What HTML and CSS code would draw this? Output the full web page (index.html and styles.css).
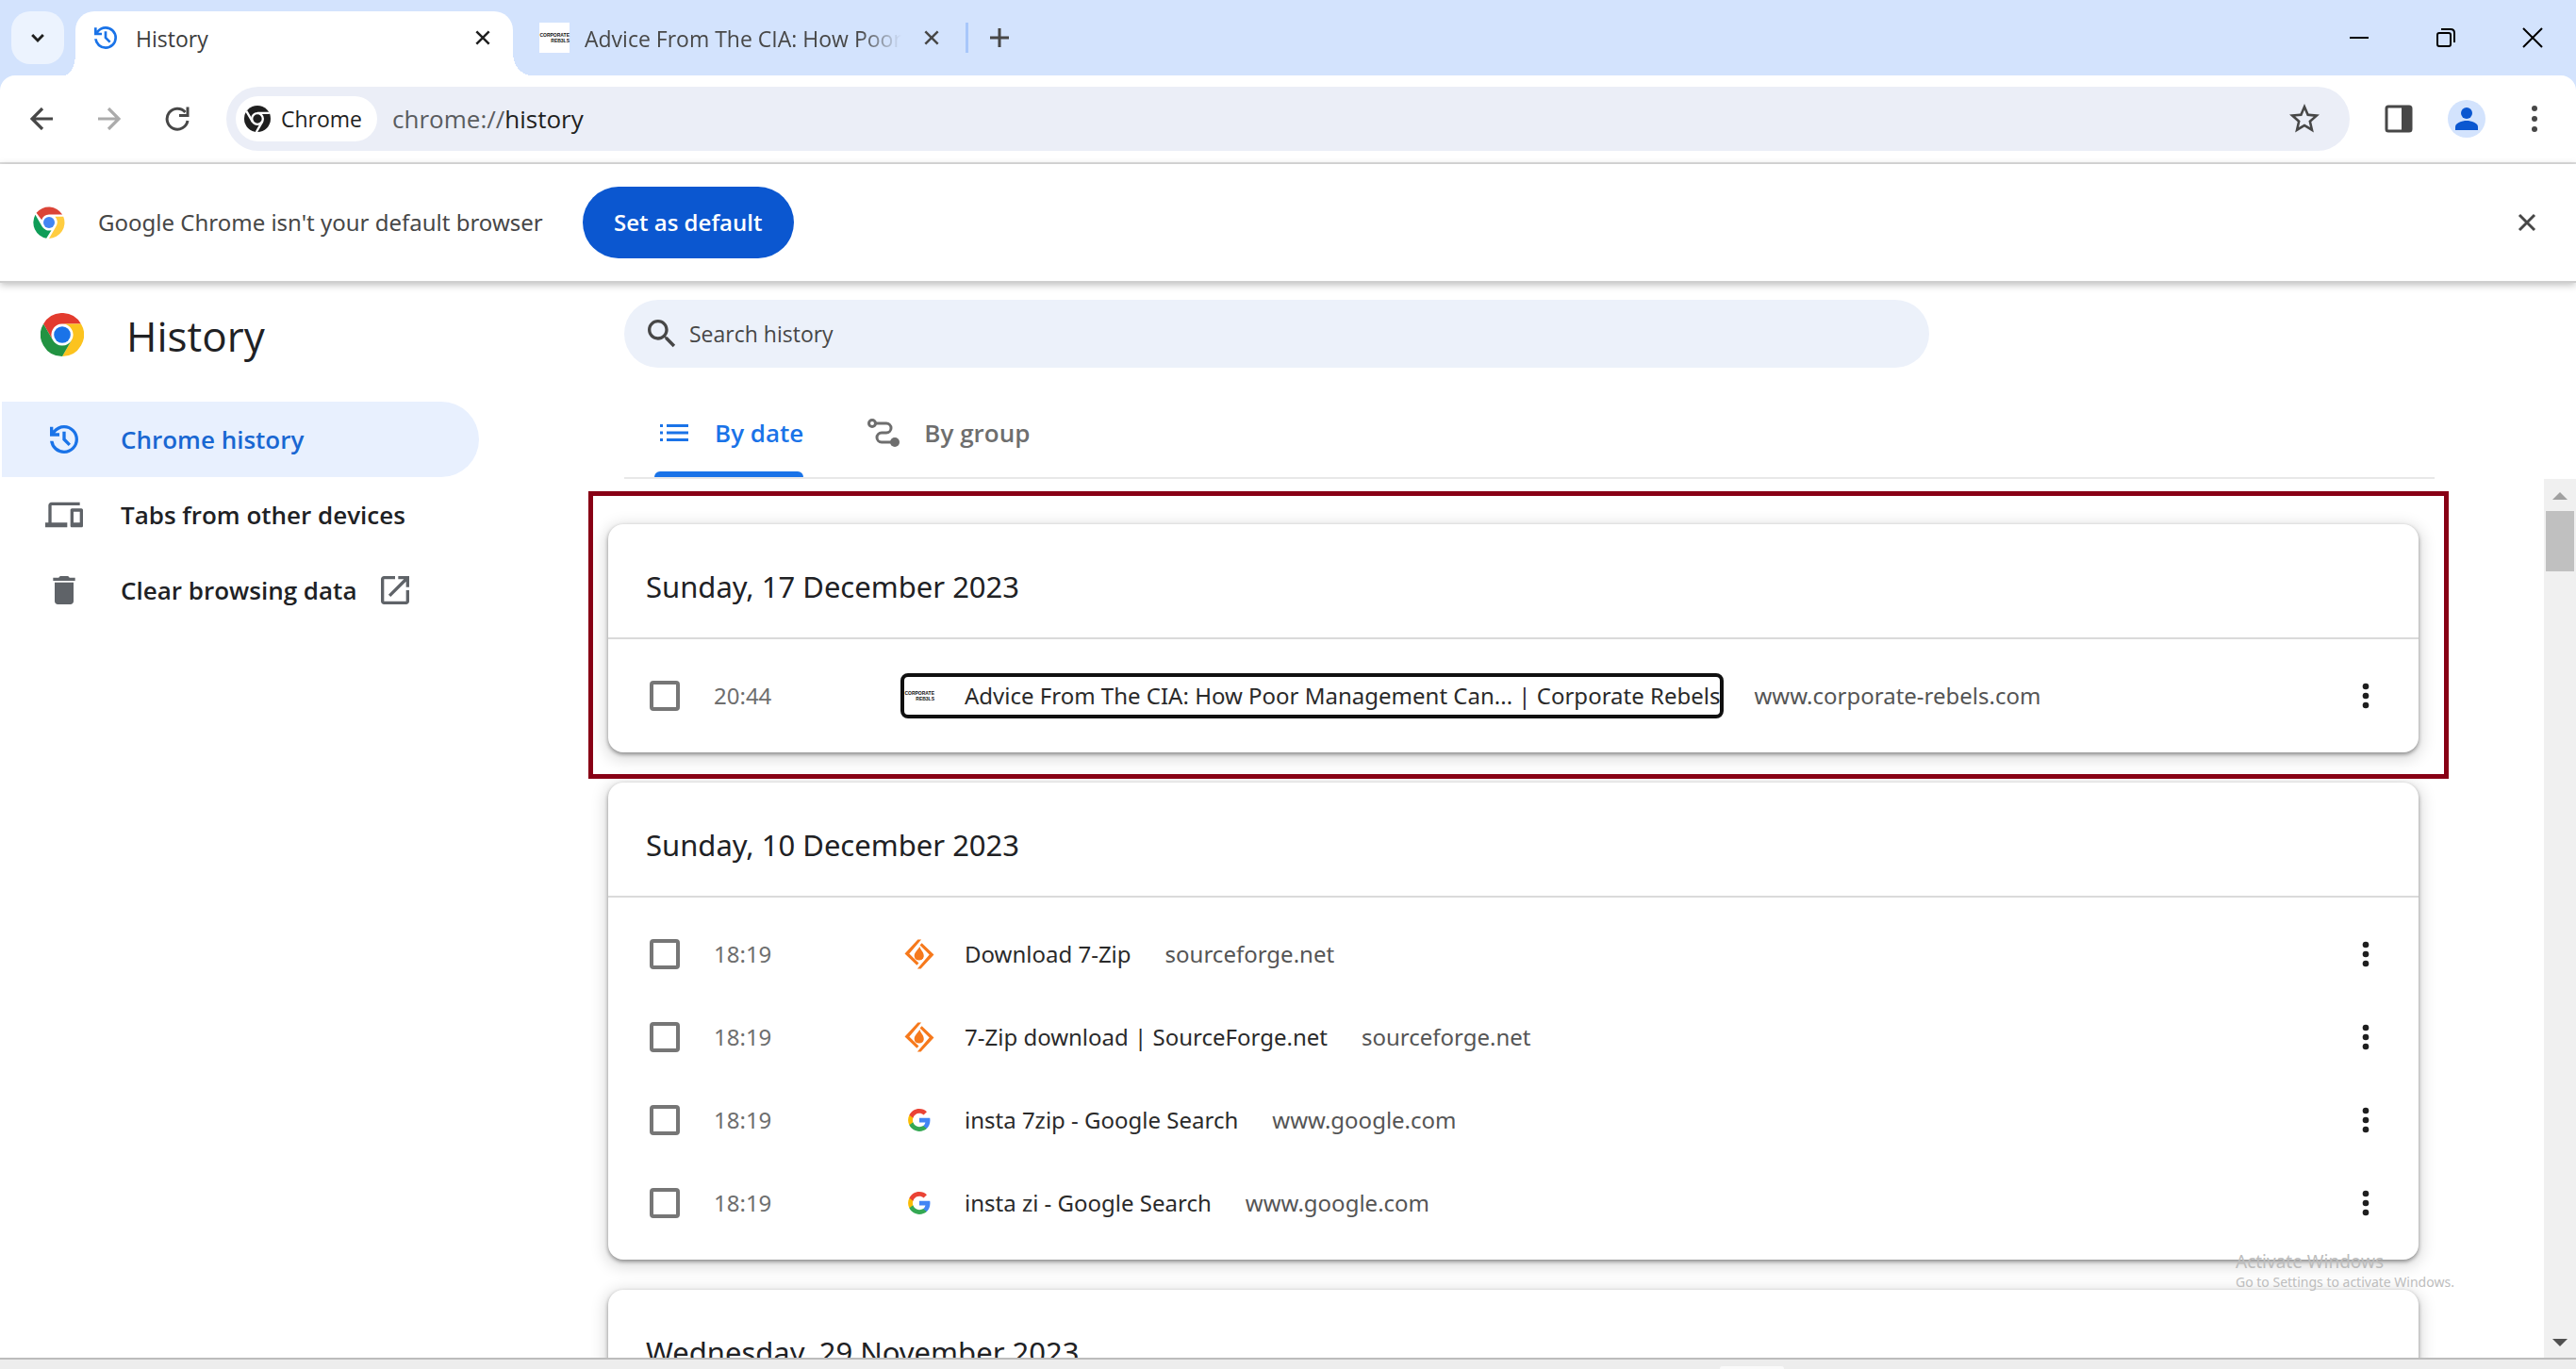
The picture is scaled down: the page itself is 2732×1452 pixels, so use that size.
FILE: index.html
```html
<!DOCTYPE html>
<html lang="en">
<head>
<meta charset="utf-8">
<title>History</title>
<link rel="stylesheet" href="styles.css">
</head>
<body>
<svg class="defs" aria-hidden="true">
  <defs>
    <symbol id="chrome" viewBox="0 0 48 48">
      <circle cx="24" cy="24" r="24" fill="#fff"/>
      <path fill="#e33b2e" d="M3.2 12A24 24 0 0 1 44.8 12H24A12 12 0 0 0 13.6 30Z"/>
      <path fill="#fcc31e" d="M44.8 12A24 24 0 0 1 24 48L34.4 30A12 12 0 0 0 24 12Z"/>
      <path fill="#229342" d="M24 48A24 24 0 0 1 3.2 12L13.6 30A12 12 0 0 0 34.4 30Z"/>
      <circle cx="24" cy="24" r="11.5" fill="#fff"/>
      <circle cx="24" cy="24" r="9.2" fill="#1a73e8"/>
    </symbol>
    <symbol id="chrome-flat" viewBox="0 0 48 48">
      <path fill="#db4437" d="M5 9.500A24 24 0 0 1 44 12H24A12 12 0 0 0 13 20Z"/>
      <path fill="#ffcd40" d="M45.500 15A24 24 0 0 1 24 48L34.4 30A12 12 0 0 0 33 15Z"/>
      <path fill="#0f9d58" d="M20 47.700A24 24 0 0 1 3.500 12.500L13.600 30A12 12 0 0 0 27.500 35.500Z"/>
      <circle cx="24" cy="24" r="10.500" fill="#fff"/>
      <circle cx="24" cy="24" r="8.500" fill="#4285f4"/>
    </symbol>
    <symbol id="history" viewBox="0 0 24 24">
      <path d="M12 21q-3.450 0-6.012-2.288Q3.425 16.425 3.050 13H5.100q.350 2.600 2.313 4.300Q9.375 19 12 19q2.925 0 4.963-2.038Q19 14.925 19 12t-2.037-4.963Q14.925 5 12 5q-1.725 0-3.225.8T6.250 8H9v2H3V4h2v2.350q1.275-1.600 3.113-2.475Q9.950 3 12 3q1.875 0 3.513.712 1.637.713 2.850 1.925 1.212 1.213 1.924 2.850Q21 10.125 21 12t-.713 3.513q-.712 1.637-1.924 2.850-1.213 1.212-2.850 1.924Q13.875 21 12 21Zm2.800-4.800L11 12.400V7h2v4.600l3.200 3.200Z"/>
    </symbol>
    <symbol id="dots" viewBox="0 0 24 24"><circle cx="12" cy="6" r="2"/><circle cx="12" cy="12" r="2"/><circle cx="12" cy="18" r="2"/></symbol>
    <symbol id="cross" viewBox="0 0 24 24"><path d="M4 4 20 20M20 4 4 20" fill="none" stroke="currentColor" stroke-width="3"/></symbol>
    <symbol id="forge" viewBox="1 1 30 30">
      <path fill="#f6791c" d="M14.500 1.500H18L6 15.500 15.500 25 13.500 27 1.500 15.500ZM18.500 5 30.500 16.500 17.500 30.500H14L26 16.500 16.500 7Z"/>
      <path fill="#f6791c" d="M16.500 8.500C17 12 20.500 13.500 20.500 18A4.800 4.800 0 0 1 11 18C11 15 13 13 16.500 8.500Z"/>
    </symbol>
    <symbol id="google" viewBox="0 0 24 24">
      <path fill="#4285f4" d="M22.560 12.250c0-.78-.070-1.530-.200-2.250H12v4.260h5.920c-.260 1.370-1.040 2.530-2.210 3.310v2.770h3.570c2.080-1.920 3.280-4.740 3.280-8.090z"/>
      <path fill="#34a853" d="M12 23c2.970 0 5.460-.98 7.280-2.660l-3.570-2.770c-.98.66-2.230 1.060-3.710 1.060-2.860 0-5.290-1.930-6.160-4.530H2.180v2.840C3.990 20.530 7.700 23 12 23z"/>
      <path fill="#fbbc05" d="M5.840 14.090c-.220-.66-.350-1.360-.350-2.090s.130-1.430.350-2.090V7.070H2.180C1.430 8.550 1 10.220 1 12s.430 3.450 1.180 4.930l3.660-2.840z"/>
      <path fill="#ea4335" d="M12 5.380c1.620 0 3.060.56 4.210 1.640l3.150-3.150C17.450 2.090 14.970 1 12 1 7.700 1 3.990 3.470 2.180 7.070l3.660 2.840C6.710 7.310 9.140 5.380 12 5.380z"/>
    </symbol>
  </defs>
</svg>

<header class="tabstrip">
  <button class="tab-search" aria-label="Search tabs"><svg viewBox="0 0 24 24"><path d="M5 8.500 12 15.500 19 8.500" fill="none" stroke="currentColor" stroke-width="3.500"/></svg></button>
  <div class="tab active">
    <svg class="fav blue"><use href="#history"/></svg>
    <span class="tab-title">History</span>
    <button class="tab-close dark" aria-label="Close tab"><svg><use href="#cross"/></svg></button>
  </div>
  <div class="tab">
    <span class="rebels boxed"><b>CORPORATE</b><b>REB3LS</b></span>
    <span class="tab-title fade">Advice From The CIA: How Poor</span>
    <button class="tab-close" aria-label="Close tab"><svg><use href="#cross"/></svg></button>
  </div>
  <button class="new-tab" aria-label="New tab"><svg viewBox="0 0 24 24"><path d="M12 2V22M2 12H22" fill="none" stroke="currentColor" stroke-width="3"/></svg></button>
  <div class="window-controls">
    <button aria-label="Minimise"><svg viewBox="0 0 20 20"><path d="M0 10H20"/></svg></button>
    <button aria-label="Restore"><svg viewBox="0 0 20 20"><rect x="1" y="5" width="14" height="14" rx="2"/><path d="M5 1H15Q19 1 19 5V15"/></svg></button>
    <button aria-label="Close"><svg viewBox="0 0 20 20"><path d="M0 0 20 20M20 0 0 20"/></svg></button>
  </div>
</header>

<div class="toolbar-back"><nav class="toolbar" aria-label="Navigation">
  <button class="tool" aria-label="Back"><svg viewBox="0 0 24 24"><path d="M24 12H3M13 1 2 12 13 23" fill="none" stroke="currentColor" stroke-width="3.200"/></svg></button>
  <button class="tool dim" aria-label="Forward"><svg viewBox="0 0 24 24"><path d="M0 12H21M11 1 22 12 11 23" fill="none" stroke="currentColor" stroke-width="3.200"/></svg></button>
  <button class="tool reload" aria-label="Reload"><svg viewBox="0 0 28 28"><path d="M25 16A11 11 0 1 1 22.500 7" fill="none" stroke="currentColor" stroke-width="3"/><path d="M26.500 1.500V12H16V9H23.500V1.500Z"/></svg></button>
  <div class="omnibox">
    <button class="chip"><svg viewBox="0 0 48 48"><circle cx="24" cy="24" r="24" fill="#1f1f1f"/><circle cx="24" cy="24" r="10" fill="none" stroke="#fff" stroke-width="4"/><path d="M24 13.500H46M15 29 4 10M33 29 22 48" stroke="#fff" stroke-width="4"/></svg>Chrome</button>
    <label class="url"><span class="scheme">chrome://</span><input aria-label="Address" value="history"></label>
    <button class="star" aria-label="Bookmark"><svg viewBox="2 2 20 20"><path d="M22 9.240l-7.190-.62L12 2 9.190 8.630 2 9.240l5.460 4.730L5.820 21 12 17.270 18.180 21l-1.630-7.030L22 9.240zM12 15.400l-3.760 2.270 1-4.280-3.320-2.880 4.380-.38L12 6.100l1.710 4.040 4.380.38-3.320 2.880 1 4.280L12 15.400z"/></svg></button>
  </div>
  <button class="tool" aria-label="Side panel"><svg class="panel" viewBox="0 0 30 30"><rect x="2" y="2" width="26" height="26" rx="2" fill="none" stroke="currentColor" stroke-width="3"/><path d="M18 2H28V28H18Z"/></svg></button>
  <button class="tool" aria-label="Profile"><svg class="avatar" viewBox="0 0 40 40"><circle cx="20" cy="20" r="20" fill="#d3e3fd"/><circle cx="20" cy="14" r="6"/><path d="M8 32V28.500C8 24.500 15 22 20 22S32 24.500 32 28.500V32Z"/></svg></button>
  <button class="tool" aria-label="Menu"><svg class="menu-dots" viewBox="0 0 12 30"><circle cx="6" cy="4" r="3"/><circle cx="6" cy="15" r="3"/><circle cx="6" cy="26" r="3"/></svg></button>
</nav></div>

<div class="infobar">
  <svg class="info-logo"><use href="#chrome-flat"/></svg>
  <span class="info-text">Google Chrome isn't your default browser</span>
  <button class="set-default">Set as default</button>
  <button class="info-close" aria-label="Dismiss"><svg><use href="#cross"/></svg></button>
</div>

<div class="page">
  <aside class="sidebar">
    <div class="brand"><svg><use href="#chrome"/></svg><h1>History</h1></div>
    <nav>
      <a class="nav-item current" href="#history-list"><svg><use href="#history"/></svg>Chrome history</a>
      <a class="nav-item" href="#devices"><svg viewBox="0 0 24 24"><path d="M4 6h18V4H4c-1.100 0-2 .9-2 2v11H0v3h14v-3H4V6zm19 2h-6c-.55 0-1 .45-1 1v10c0 .55.450 1 1 1h6c.55 0 1-.45 1-1V9c0-.55-.45-1-1-1zm-1 9h-4v-7h4v7z"/></svg>Tabs from other devices</a>
      <a class="nav-item" href="#clear"><svg viewBox="0 0 24 24"><path d="M6 19c0 1.100.9 2 2 2h8c1.100 0 2-.9 2-2V7H6v12zM19 4h-3.500l-1-1h-5l-1 1H5v2h14V4z"/></svg>Clear browsing data<svg class="external" viewBox="3 3 18 18"><path d="M19 19H5V5h7V3H5c-1.110 0-2 .9-2 2v14c0 1.100.89 2 2 2h14c1.100 0 2-.9 2-2v-7h-2v7zM14 3v2h3.590l-9.830 9.830 1.410 1.410L19 6.410V10h2V3h-7z"/></svg></a>
    </nav>
  </aside>

  <main class="main">
    <div class="top">
      <label class="search"><svg viewBox="3 3 18 18"><path d="M15.500 14h-.79l-.28-.27C15.410 12.590 16 11.110 16 9.500 16 5.910 13.090 3 9.500 3S3 5.910 3 9.500 5.910 16 9.500 16c1.610 0 3.090-.59 4.230-1.570l.27.280v.79l5 4.990L20.490 19l-4.990-5zm-6 0C7.010 14 5 11.990 5 9.500S7.010 5 9.500 5 14 7.010 14 9.500 11.990 14 9.500 14z"/></svg><input type="search" placeholder="Search history" aria-label="Search history"></label>
      <div class="views" role="tablist">
        <button class="view on" role="tab" aria-selected="true"><svg viewBox="0 0 34 34"><path d="M2 8h3v3H2zM2 15.500h3v3H2zM2 23h3v3H2zM9 8H32v3H9zM9 15.500H32v3H9zM9 23H32v3H9z"/></svg>By date</button>
        <button class="view" role="tab" aria-selected="false"><svg viewBox="0 0 34 34"><circle cx="5" cy="7" r="3.500" fill="none" stroke="currentColor" stroke-width="3"/><circle cx="29" cy="27" r="5"/><path d="M9 7H20A5 5 0 0 1 20 17H15A5 5 0 0 0 15 27H26" fill="none" stroke="currentColor" stroke-width="3"/></svg>By group</button>
      </div>
    </div>

    <div class="scroll">
      <div class="list" id="history-list">
        <section class="card">
          <h2>Sunday, 17 December 2023</h2>
          <ul>
            <li><input type="checkbox" aria-label="Select Advice From The CIA"><time>20:44</time><a class="entry focused" href="#e1"><span class="rebels"><b>CORPORATE</b><b>REB3LS</b></span>Advice From The CIA: How Poor Management Can... | Corporate Rebels</a><span class="domain">www.corporate-rebels.com</span><button class="more" aria-label="Actions"><svg><use href="#dots"/></svg></button></li>
          </ul>
          <div class="highlight"></div>
        </section>
        <section class="card">
          <h2>Sunday, 10 December 2023</h2>
          <ul>
            <li><input type="checkbox" aria-label="Select Download 7-Zip"><time>18:19</time><a class="entry" href="#e2"><svg class="forge"><use href="#forge"/></svg>Download 7-Zip</a><span class="domain">sourceforge.net</span><button class="more" aria-label="Actions"><svg><use href="#dots"/></svg></button></li>
            <li><input type="checkbox" aria-label="Select 7-Zip download"><time>18:19</time><a class="entry" href="#e3"><svg class="forge"><use href="#forge"/></svg>7-Zip download | SourceForge.net</a><span class="domain">sourceforge.net</span><button class="more" aria-label="Actions"><svg><use href="#dots"/></svg></button></li>
            <li><input type="checkbox" aria-label="Select insta 7zip"><time>18:19</time><a class="entry" href="#e4"><svg class="google"><use href="#google"/></svg>insta 7zip - Google Search</a><span class="domain">www.google.com</span><button class="more" aria-label="Actions"><svg><use href="#dots"/></svg></button></li>
            <li><input type="checkbox" aria-label="Select insta zi"><time>18:19</time><a class="entry" href="#e5"><svg class="google"><use href="#google"/></svg>insta zi - Google Search</a><span class="domain">www.google.com</span><button class="more" aria-label="Actions"><svg><use href="#dots"/></svg></button></li>
          </ul>
        </section>
        <section class="card">
          <h2>Wednesday, 29 November 2023</h2>
        </section>
      </div>
      <div class="scrollbar" aria-hidden="true">
        <svg class="up" viewBox="0 0 16 8"><path d="M0 8 8 0 16 8Z"/></svg>
        <div class="thumb"></div>
        <svg class="down" viewBox="0 0 16 8"><path d="M0 0 8 8 16 0Z"/></svg>
      </div>
    </div>
  </main>
</div>
<footer class="edge"><div class="edge-tab"></div></footer>
<div class="watermark"><p>Activate Windows</p><small>Go to Settings to activate Windows.</small></div>
</body>
</html>
```
FILE: styles.css
```css
* { box-sizing: border-box; }
html, body { height: 100%; }
body {
  margin: 0;
  display: flex;
  flex-direction: column;
  overflow: hidden;
  background: #fff;
  color: #202124;
  font: 24px/32px "Open Sans", "Noto Sans", sans-serif;
}
button { border: 0; padding: 0; background: none; color: inherit; font: inherit; display: flex; align-items: center; justify-content: center; flex: none; }
input { font: inherit; color: inherit; border: 0; background: none; padding: 0; outline: 0; }
svg { fill: currentColor; flex: none; display: block; }
a { color: inherit; text-decoration: none; }
.defs { position: absolute; width: 0; height: 0; }

/* Tab strip */
.tabstrip { display: flex; height: 80px; flex: none; padding: 12px 0 0 12px; background: #d3e3fd; color: #474747; }
.tab-search { width: 56px; height: 56px; border-radius: 20px; background: #ecf3fe; color: #1f1f1f; margin-right: 12px; }
.tab-search svg { width: 20px; height: 20px; }
.tab { position: relative; display: flex; align-items: center; width: 480px; height: 56px; padding: 0 24px 0 28px; }
.tab.active { width: 464px; height: 68px; padding: 0 20px 12px 16px; background: #fff; border-radius: 20px 20px 0 0; color: #3c3c3c; }
.tab.active::before, .tab.active::after { content: ""; position: absolute; bottom: 0; width: 12px; height: 24px; }
.tab.active::before { right: 100%; background: radial-gradient(12px 24px at 0 0, #d3e3fd 100%, #fff 100%); }
.tab.active::after { left: 100%; width: 20px; background: radial-gradient(20px 24px at 100% 0, #d3e3fd 100%, #fff 100%); }
.fav { width: 32px; height: 32px; }
.blue { color: #1a73e8; }
.tab-title { flex: 1; padding-top: 2px; margin-left: 16px; font-size: 23px; white-space: nowrap; overflow: hidden; }
.fade { margin-right: 20px; -webkit-mask: linear-gradient(to left, transparent, #000 44px); mask: linear-gradient(to left, transparent, #000 44px); }
.tab-close { width: 24px; height: 24px; }
.tab-close svg { width: 20px; height: 20px; }
.dark { color: #1f1f1f; }
.new-tab { position: relative; width: 72px; height: 56px; }
.new-tab::before { content: ""; position: absolute; left: 0; top: 12px; width: 3px; height: 32px; background: #a8c7fa; }
.new-tab svg { width: 24px; height: 24px; }
.window-controls { display: flex; margin-left: auto; height: 56px; color: #000; }
.window-controls button { width: 92px; }
.window-controls svg { width: 20px; height: 20px; fill: none; stroke: #000; stroke-width: 2; overflow: visible; }
.rebels { display: flex; flex-direction: column; align-items: flex-end; justify-content: center; width: 32px; height: 32px; flex: none; color: #111; font: 5px/6px "Liberation Sans", sans-serif; }
.boxed { background: #fff; }

/* Toolbar */
.toolbar-back { flex: none; background: #d3e3fd; }
.toolbar { display: flex; align-items: center; height: 94px; padding: 0 8px; background: #fff; border-bottom: 2px solid #e0e0e0; border-radius: 16px 16px 0 0; color: #474747; }
.tool { width: 72px; height: 68px; }
.tool svg { width: 24px; height: 24px; }
.tool.reload svg { width: 28px; height: 28px; }
.tool .panel { width: 30px; height: 30px; }
.tool .avatar { width: 40px; height: 40px; color: #0b57d0; }
.tool .menu-dots { width: 12px; height: 30px; }
.dim { color: #ababab; }
.omnibox { display: flex; align-items: center; flex: 1; height: 68px; margin: 0 16px; padding: 0 32px 0 10px; border-radius: 34px; background: #ebeef7; }
.chip { gap: 11px; height: 48px; padding: 0 16px 0 9px; border-radius: 24px; background: #fff; color: #1f1f1f; font-size: 23px; font-weight: 500; }
.chip svg { width: 28px; height: 28px; }
.url { display: flex; flex: 1; margin-left: 16px; font-size: 26px; }
.scheme { color: #5a5c5f; }
.url input { flex: 1; color: #1f1f1f; }
.star svg { width: 32px; height: 32px; }

/* Default-browser bar */
.infobar { position: relative; z-index: 1; display: flex; align-items: center; flex: none; height: 126px; padding: 0 40px 0 35px; border-bottom: 2px solid #cecece; box-shadow: 0 2px 8px #0004; background: #fff; color: #474747; }
.info-logo { width: 34px; height: 34px; margin-right: 35px; }
.info-text { font-family: "Noto Sans", sans-serif; }
.set-default { width: 224px; height: 76px; margin-left: 42px; border-radius: 38px; background: #0b57d0; color: #fff; font-weight: 600; }
.info-close { margin-left: auto; }
.info-close svg { width: 24px; height: 24px; }

/* Page */
.page { display: flex; flex: 1; min-height: 0; }
.sidebar { width: 508px; flex: none; padding-left: 2px; }
.brand { display: flex; align-items: center; gap: 45px; height: 110px; padding-left: 41px; margin-bottom: 16px; }
.brand svg { width: 46px; height: 46px; }
.brand h1 { margin: 0; padding-top: 2px; font-size: 44px; line-height: 56px; font-weight: 500; }
.nav-item { display: flex; align-items: center; height: 80px; padding-left: 46px; font-size: 26px; font-weight: 600; }
.nav-item svg { width: 40px; height: 40px; margin-right: 40px; color: #5f6368; }
.nav-item .external { width: 30px; height: 30px; margin: 0 0 0 26px; }
.current { border-radius: 0 40px 40px 0; background: #e8f0fe; color: #1967d2; }
.nav-item.current svg { color: #1a73e8; }

.main { display: flex; flex-direction: column; flex: 1; min-width: 0; margin-left: 116px; }
.top { margin-right: 150px; padding: 18px 0 0 38px; }
.search { display: flex; align-items: center; gap: 14px; width: 1384px; max-width: 100%; height: 72px; padding-left: 25px; border-radius: 36px; background: #ecf1fa; color: #474747; }
.search svg { width: 30px; height: 30px; }
.search input { flex: 1; font-size: 23px; font-weight: 500; }
.search input::placeholder { color: #474747; opacity: 1; }
.views { display: flex; gap: 64px; height: 118px; padding: 26px 32px 0; border-bottom: 2px solid #e8e8e8; }
.view { position: relative; gap: 26px; height: 90px; padding: 0 0 4px 4px; color: #6e6e6e; font-size: 26px; font-weight: 600; }
.view svg { width: 34px; height: 34px; }
.view.on { color: #1a73e8; }
.view.on::after { content: ""; position: absolute; inset: auto 0 0; height: 6px; border-radius: 6px 6px 0 0; background: #1a73e8; }

.scroll { display: flex; flex: 1; min-height: 0; overflow: hidden; }
.list { display: flex; flex-direction: column; gap: 32px; flex: 1; padding: 48px 133px 0 21px; font-family: "Noto Sans", sans-serif; }
.card { position: relative; flex: none; border-radius: 16px; background: #fff; box-shadow: 0 2px 4px #0006, 0 4px 16px 4px #0002; }
.card h2 { margin: 0; padding: 40px 40px 28px; height: 122px; border-bottom: 2px solid #dadada; font-size: 31px; line-height: 52px; font-weight: 400; }
.card ul { margin: 0; padding: 16px 0; list-style: none; }
.card li { display: flex; align-items: center; height: 88px; padding: 0 40px 0 44px; }
.card input { appearance: none; width: 32px; height: 32px; margin: 0; border: 4px solid #767676; border-radius: 4px; }
.card time { width: 198px; margin-left: 36px; color: #6e6e6e; }
.entry { display: flex; align-items: center; height: 48px; padding: 0 4px; color: #2a2a2a; }
.entry > :first-child { margin-right: 32px; }
.focused { border: 4px solid #101010; border-radius: 8px; padding: 0; }
.forge, .google { width: 32px; height: 32px; }
.google { padding: 3px; }
.domain { margin-left: 32px; color: #555; }
.more { width: 32px; height: 40px; margin-left: auto; color: #1f1f1f; }
.more svg { width: 40px; height: 40px; }
/* Annotation frame over the first day */
.highlight { position: absolute; inset: -35px -32px -28px -21px; border: 5px solid #880015; pointer-events: none; z-index: 1; }

.scrollbar { display: flex; flex-direction: column; align-items: center; width: 34px; flex: none; padding: 14px 0 12px; background: #f0f0f0; }
.scrollbar svg { width: 16px; height: 8px; }
.up { color: #a0a0a0; }
.down { margin-top: auto; color: #505050; }
.thumb { width: 30px; height: 64px; margin-top: 12px; background: #c0c0c0; }
.edge { display: flex; align-items: flex-end; justify-content: center; flex: none; height: 12px; padding-left: 36%; border-top: 2px solid #bcbcbc; background: #ededed; overflow: hidden; }
.edge-tab { width: 68px; height: 3px; border-radius: 3px 3px 0 0; background: #fafafa; }
.watermark { position: absolute; right: 125px; bottom: 82px; width: 236px; color: #bdbdbd; font-family: "Noto Sans", sans-serif; white-space: nowrap; }
.watermark p { margin: 0; font-size: 19px; line-height: 24px; }
.watermark small { display: block; font-size: 14px; line-height: 20px; }
```
